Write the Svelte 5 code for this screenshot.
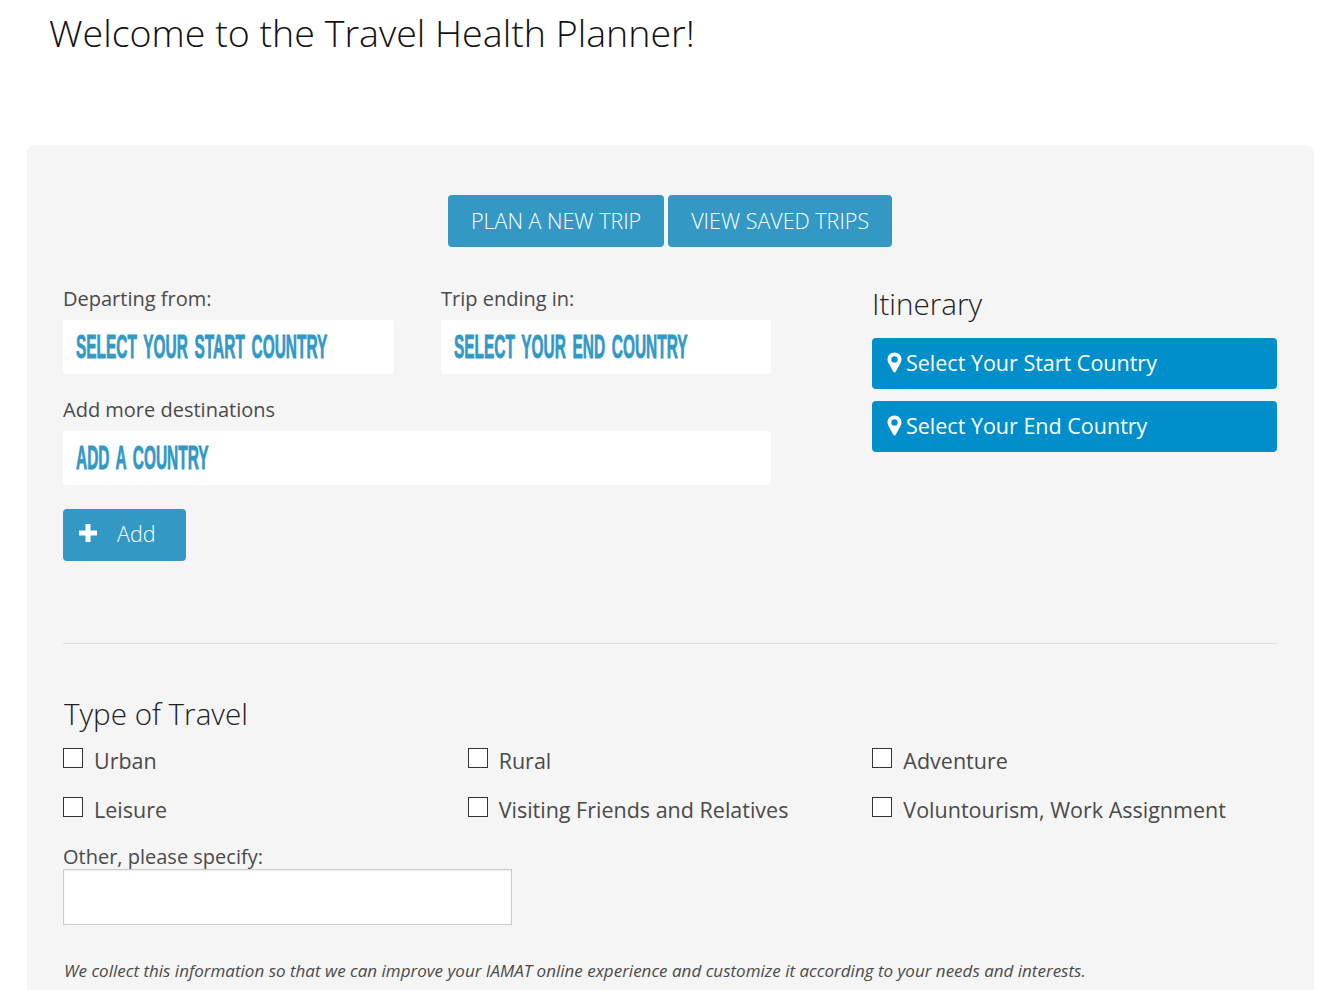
<script lang="ts">
  // Trip planner landing form. Static copy only, nothing is wired up yet.
  const travelTypes = [
    'Urban',
    'Rural',
    'Adventure',
    'Leisure',
    'Visiting Friends and Relatives',
    'Voluntourism, Work Assignment'
  ];
  const stops = ['Select Your Start Country', 'Select Your End Country'];
</script>

<main class="page">
  <h1>Welcome to the Travel Health Planner!</h1>

  <section class="panel">
    <div class="tabs">
      <button type="button" class="btn tab">PLAN A NEW TRIP</button>
      <button type="button" class="btn tab">VIEW SAVED TRIPS</button>
    </div>

    <div class="planner">
      <div class="fields">
        <div class="field">
          <span class="label">Departing from:</span>
          <div class="picker"><span>SELECT YOUR START COUNTRY</span></div>
        </div>
        <div class="field">
          <span class="label">Trip ending in:</span>
          <div class="picker"><span>SELECT YOUR END COUNTRY</span></div>
        </div>
        <div class="field wide">
          <span class="label">Add more destinations</span>
          <div class="picker"><span>ADD A COUNTRY</span></div>
        </div>
        <button type="button" class="btn add">
          <svg width="20" height="20" viewBox="0 0 20 20" aria-hidden="true">
            <path d="M7.5 1h5v6.5H19v5h-6.5V19h-5v-6.5H1v-5h6.5z" fill="#fff" />
          </svg>
          Add
        </button>
      </div>

      <aside class="itinerary">
        <h2>Itinerary</h2>
        {#each stops as stop}
          <div class="stop">
            <svg width="15" height="21" viewBox="0 0 15 21" aria-hidden="true">
              <path
                fill="#fff"
                fill-rule="evenodd"
                d="M7.5 0.5C3.4 0.5 0.5 3.5 0.5 7.3c0 1.4.4 2.4 1 3.6l4.8 8.9c.5 1 1.9 1 2.4 0l4.8-8.9c.6-1.2 1-2.2 1-3.6C14.500 3.500 11.600.5 7.500.5zM7.500 4.200a3.200 3.200 0 1 1 0 6.400a3.200 3.200 0 0 1 0-6.400z"
              />
            </svg>
            {stop}
          </div>
        {/each}
      </aside>
    </div>

    <hr />

    <h2 class="type-title">Type of Travel</h2>
    <div class="types">
      {#each travelTypes as type}
        <label class="check">
          <input type="checkbox" />
          <span>{type}</span>
        </label>
      {/each}
    </div>

    <label class="other">
      <span class="label">Other, please specify:</span>
      <input type="text" />
    </label>

    <p class="note">
      We collect this information so that we can improve your IAMAT online experience and customize it according to your needs and interests.
    </p>
  </section>
</main>

<style>
  :global(body) {
    background: #fff;
  }

  .page {
    font-family: 'Open Sans', 'Noto Sans', sans-serif;
    color: #4a4a4a;
    padding-left: 27px;
    width: 1287px;
  }

  h1 {
    margin: 0;
    padding: 7px 0 0 22px;
    height: 145px;
    box-sizing: border-box;
    font-family: 'Open Sans', sans-serif;
    font-size: 37.6px;
    line-height: 52px;
    font-weight: 300;
    color: #111;
  }

  .panel {
    background: #f5f5f5;
    border-radius: 8px 8px 0 0;
    padding: 50px 37px 7px 36px;
  }

  .tabs {
    display: flex;
    justify-content: center;
    gap: 4px;
  }

  .btn {
    border: 0;
    border-radius: 4px;
    background: #3399c4;
    color: #fff;
    font-family: inherit;
    font-weight: 300;
  }

  .tab {
    height: 52px;
    padding: 0 23px 2px;
    font-size: 21.5px;
  }

  .planner {
    display: grid;
    grid-template-columns: 708px 405px;
    justify-content: space-between;
    margin-top: 40px;
  }

  .fields {
    display: grid;
    grid-template-columns: 331px 330px;
    column-gap: 47px;
    row-gap: 24px;
    align-items: start;
  }

  .wide {
    grid-column: 1 / -1;
  }

  .label {
    display: block;
    font-size: 20px;
    line-height: 24px;
    margin-bottom: 9px;
  }

  .picker {
    height: 54px;
    display: flex;
    align-items: center;
    padding-left: 13px;
    background: #fff;
    border-radius: 3px;
    color: #3399c4;
    overflow: hidden;
  }

  /* no condensed gothic installed, so squeeze a bold sans to the same width */
  .picker span {
    display: block;
    font-family: 'Liberation Sans', sans-serif;
    font-size: 33px;
    font-weight: 700;
    word-spacing: 5px;
    white-space: nowrap;
    transform: scaleX(0.468);
    transform-origin: left center;
    -webkit-text-stroke: 0.9px #3399c4;
  }

  .add {
    grid-column: 1 / -1;
    justify-self: start;
    display: flex;
    align-items: center;
    gap: 19px;
    width: 123px;
    height: 52px;
    padding: 0 0 4px 15px;
    font-size: 21.5px;
  }

  .itinerary h2 {
    margin: -3px 0 14px;
  }

  h2 {
    font-family: 'Open Sans', sans-serif;
    font-size: 29.6px;
    line-height: 40px;
    font-weight: 300;
    color: #222;
  }

  .stop {
    display: flex;
    align-items: center;
    gap: 4px;
    box-sizing: border-box;
    height: 51px;
    margin-bottom: 12px;
    padding: 0 0 2px 15px;
    background: #008fca;
    border-radius: 4px;
    color: #fff;
    font-size: 21.5px;
  }

  hr {
    border: 0;
    border-top: 1px solid #ddd;
    margin: 82px 0 0;
  }

  .type-title {
    margin: 50px 0 0 1px;
  }

  .types {
    display: grid;
    grid-template-columns: repeat(3, 1fr);
    row-gap: 9px;
    margin-top: 12px;
  }

  .check {
    display: flex;
    align-items: flex-start;
    gap: 11px;
    height: 40px;
    font-size: 21.5px;
    line-height: 30px;
  }

  .check input {
    appearance: none;
    flex: none;
    width: 20px;
    height: 20px;
    margin: 2px 0 0;
    background: #fff;
    border: 1px solid #333;
  }

  .other {
    display: block;
    margin-top: 10px;
  }

  .other .label {
    margin: 0;
    font-weight: 500;
  }

  .other input {
    display: block;
    box-sizing: border-box;
    width: 449px;
    height: 56px;
    background: #fff;
    border: 1px solid #ccc;
    box-shadow: inset 0 1px 2px rgba(0, 0, 0, 0.08);
  }

  .note {
    margin: 34px 0 0 1px;
    font-size: 17px;
    font-style: italic;
    line-height: 24px;
    white-space: nowrap;
  }
</style>
